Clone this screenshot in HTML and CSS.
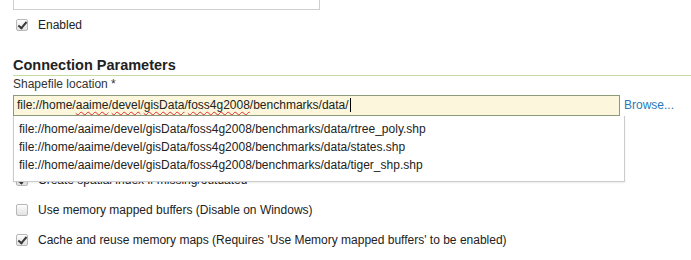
FILE: index.html
```html
<!DOCTYPE html>
<html lang="en">
<head>
  <meta charset="UTF-8">
  <title>Shapefile store</title>
  <link rel="stylesheet" href="styles.css">
</head>
<body>
  <div class="page">
    <div class="field-stub"></div>

    <div class="check-row">
      <span class="checkbox checked"></span>
      <span>Enabled</span>
    </div>

    <h2 class="section-title">Connection Parameters</h2>

    <label class="field-label" for="url">Shapefile location *</label>
    <div class="location-row">
      <div class="location-box">
        <div class="location-input" id="url">file://home/<span class="typo">aaime</span>/<span class="typo">devel</span>/<span class="typo">gisData</span>/<span class="typo">foss4g2008</span>/benchmarks/data/<span class="caret"></span></div>
        <ul class="suggestions">
          <li>file://home/aaime/devel/gisData/foss4g2008/benchmarks/data/rtree_poly.shp</li>
          <li>file://home/aaime/devel/gisData/foss4g2008/benchmarks/data/states.shp</li>
          <li>file://home/aaime/devel/gisData/foss4g2008/benchmarks/data/tiger_shp.shp</li>
        </ul>
      </div>
      <a href="#" class="browse">Browse...</a>
    </div>

    <div class="options">
      <div class="check-row">
        <span class="checkbox checked"></span>
        <span>Create spatial index if missing/outdated</span>
      </div>
      <div class="check-row">
        <span class="checkbox"></span>
        <span>Use memory mapped buffers (Disable on Windows)</span>
      </div>
      <div class="check-row">
        <span class="checkbox checked"></span>
        <span>Cache and reuse memory maps (Requires 'Use Memory mapped buffers' to be enabled)</span>
      </div>
    </div>
  </div>
</body>
</html>
```

FILE: styles.css
```css
body {
  margin: 0;
  padding: 0;
  background-color: #fff;
  font-family: "Liberation Sans", Arial, sans-serif;
  font-size: 12px;
  color: #222;
}

.page {
  padding-left: 13px;
}

.field-stub {
  width: 307px;
  height: 10px;
  box-sizing: border-box;
  border: 1px solid #cfcfcf;
  border-top: none;
}

.check-row {
  display: flex;
  align-items: center;
  gap: 10px;
  height: 30px;
  padding-left: 3px;
  line-height: 14px;
}

.checkbox {
  width: 12px;
  height: 12px;
  box-sizing: border-box;
  border: 1px solid #b8b8b8;
  border-radius: 2px;
  background: linear-gradient(#fdfdfd, #e2e2e2);
  position: relative;
  flex: none;
}

.checkbox.checked::after {
  content: "";
  position: absolute;
  left: 3px;
  top: 0px;
  width: 3px;
  height: 7px;
  border: solid #3a3a3a;
  border-width: 0 2px 2px 0;
  transform: rotate(40deg);
}

.section-title {
  margin: 16px 0 0 0;
  font-size: 14.5px;
  line-height: 18px;
  font-weight: bold;
  color: #222;
  padding-bottom: 1px;
  border-bottom: 1px solid #c3dc9e;
}

.field-label {
  display: block;
  line-height: 14px;
  margin-top: 1px;
  color: #333;
}

.location-row {
  display: flex;
  align-items: flex-start;
  gap: 4px;
  margin-top: 4px;
}

.location-box {
  position: relative;
  width: 607px;
}

.location-input {
  height: 21px;
  box-sizing: border-box;
  padding: 0 3px;
  line-height: 19px;
  border: 1px solid #8d9c78;
  background-color: #fbf6dc;
  color: #222;
  white-space: nowrap;
}

.typo {
  text-decoration: underline wavy #e03030;
  text-decoration-thickness: 1px;
  text-underline-offset: 2px;
}

.caret {
  display: inline-block;
  width: 1px;
  height: 14px;
  margin-left: 1px;
  vertical-align: -3px;
  background-color: #000;
}

.browse {
  color: #2a7ab8;
  text-decoration: none;
  line-height: 20px;
}

.suggestions {
  position: absolute;
  top: 21px;
  left: 0;
  width: 612px;
  box-sizing: border-box;
  margin: 0;
  padding: 4px 5px 7px 5px;
  list-style: none;
  background-color: #fff;
  border: 1px solid #cccccc;
  border-top: none;
  box-shadow: 0 1px 2px rgba(0, 0, 0, 0.08);
  z-index: 2;
}

.suggestions li {
  line-height: 18px;
  color: #222;
}

.options {
  margin-top: 49px;
}
```
